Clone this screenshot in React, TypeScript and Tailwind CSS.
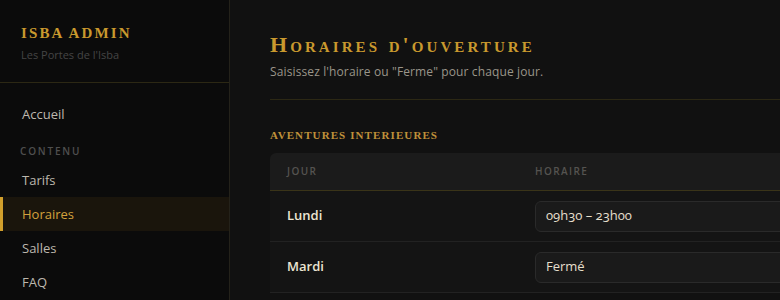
import React from 'react';

const serif = { fontFamily: '"Liberation Serif", "DejaVu Serif", serif' };

const navItems = [
  { label: 'Tarifs', active: false },
  { label: 'Horaires', active: true },
  { label: 'Salles', active: false },
  { label: 'FAQ', active: false },
];

const rows = [
  { day: 'Lundi', value: '09h30 – 23h00' },
  { day: 'Mardi', value: 'Fermé' },
];

export default function App() {
  return (
    <div
      className="flex h-[300px] w-full overflow-hidden bg-[#111111] text-[#d8d2c4]"
      style={{ fontFamily: '"Open Sans", Lato, sans-serif' }}>

      {/* SIDEBAR */}
      <aside className="flex w-[230px] shrink-0 flex-col border-r border-[#24221a] bg-[#0b0b0b]">
        <div className="border-b border-[#2c2814] px-[21px] pt-[24px] pb-[20px]">
          <h1 className="text-[15px] font-bold uppercase leading-[18px] tracking-[0.14em] text-[#c9992e]" style={serif}>
            Isba Admin
          </h1>
          <p className="mt-[6px] text-[11px] leading-[14px] text-[#454545]">Les Portes de l'Isba</p>
        </div>

        <nav className="flex flex-col pt-[15px]">
          <a className="px-[22px] py-[8px] text-[13px] leading-[17px] text-[#bdb8ae]">Accueil</a>
          <span className="px-[20px] pt-[14px] pb-[5px] text-[10px] font-semibold uppercase leading-[13px] tracking-[0.18em] text-[#4f4f4f]">
            Contenu
          </span>
          {navItems.map(item => (
            <a key={item.label}
              className={`border-l-[3px] py-[8px] pl-[19px] text-[13px] leading-[18px]
                ${item.active
                  ? 'border-[#d19f2c] bg-[#1a150c] text-[#d3a23c]'
                  : 'border-transparent text-[#bdb8ae]'}`}>
              {item.label}
            </a>
          ))}
        </nav>
      </aside>

      {/* MAIN */}
      <main className="min-w-0 flex-1 overflow-hidden pl-[40px] pt-[33px]">
        <div className="w-[760px]">
          <h2 className="text-[22px] font-bold leading-[24px] tracking-[0.14em] text-[#c9992e]"
            style={{ ...serif, fontVariant: 'small-caps' }}>
            Horaires d'ouverture
          </h2>
          <p className="mt-[7px] text-[12px] leading-[15px] tracking-[0.01em] text-[#9a958a]">
            Saisissez l'horaire ou "Ferme" pour chaque jour.
          </p>
          <div className="mt-[20px] h-px bg-[#2c2814]" />

          <h3 className="mt-[28px] text-[11px] font-bold uppercase leading-[14px] tracking-[0.1em] text-[#c0913a]" style={serif}>
            Aventures interieures
          </h3>

          <div className="mt-[11px] overflow-hidden rounded-t-[6px] bg-[#141414]">
            <div className="flex h-[38px] items-center border-b border-[#3a3418] bg-[#1b1b1b] text-[10px] font-semibold uppercase tracking-[0.14em] text-[#555350]">
              <span className="w-[248px] pl-[17px]">Jour</span>
              <span className="pl-[17px]">Horaire</span>
            </div>
            {rows.map(r => (
              <div key={r.day} className="flex h-[51px] items-center border-b border-[#222222]">
                <span className="w-[248px] pl-[17px] text-[13px] font-semibold text-[#ece5d2]">{r.day}</span>
                <div className="ml-[17px] flex h-[31px] w-[400px] items-center rounded-[6px] border border-[#2a2a2a] bg-[#1a1a1a] px-[10px] text-[13px] oldstyle-nums text-[#e6dfcc]">
                  {r.value}
                </div>
              </div>
            ))}
          </div>
        </div>
      </main>
    </div>
  );
}
